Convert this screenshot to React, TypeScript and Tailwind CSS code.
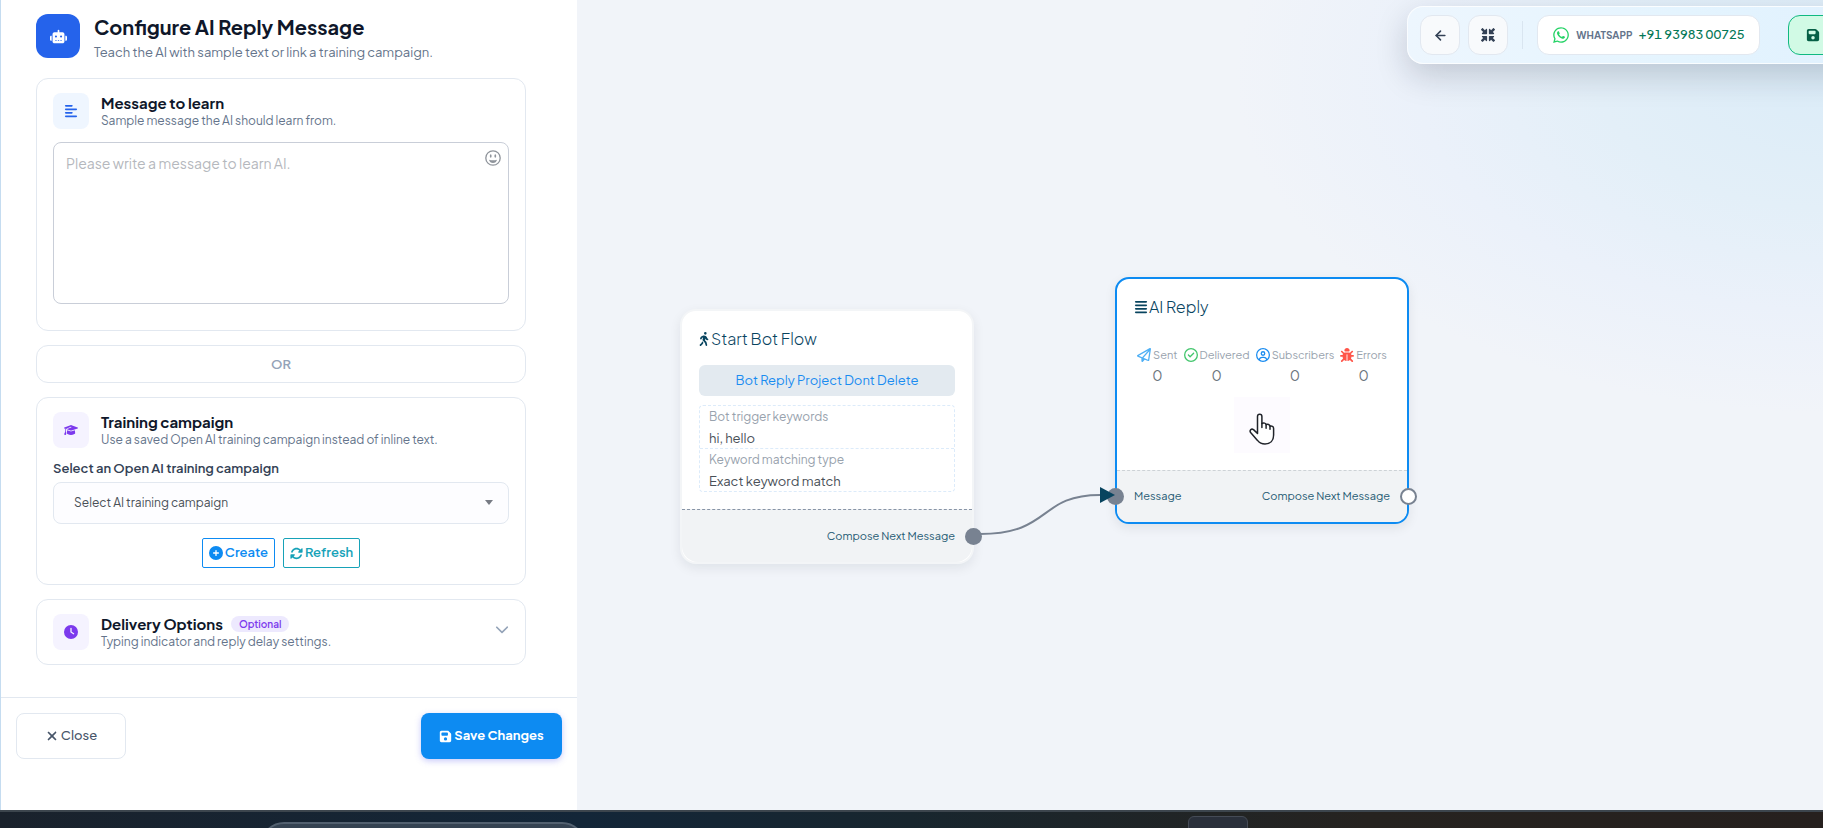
import { useState } from "react";
import type { ReactNode } from "react";
import {
  FaAlignJustify,
  FaAlignLeft,
  FaBug,
  FaChevronDown,
  FaCirclePlus,
  FaClock,
  FaFloppyDisk,
  FaGraduationCap,
  FaMinimize,
  FaPersonWalking,
  FaRegCircleCheck,
  FaRegCircleUser,
  FaRegPaperPlane,
  FaRobot,
  FaRotate,
  FaWhatsapp,
  FaXmark,
} from "react-icons/fa6";
import { ArrowLeft } from "lucide-react";

const STATS = [
  { label: "Sent", value: 0, icon: FaRegPaperPlane, color: "text-[#4fb0f5]" },
  { label: "Delivered", value: 0, icon: FaRegCircleCheck, color: "text-[#43c66d]" },
  { label: "Subscribers", value: 0, icon: FaRegCircleUser, color: "text-[#1a8cf0]" },
  { label: "Errors", value: 0, icon: FaBug, color: "text-[#ff5549]" },
];

const TRIGGERS = [
  { label: "Bot trigger keywords", value: "hi, hello" },
  { label: "Keyword matching type", value: "Exact keyword match" },
];

function Card({ children, className = "" }: { children: ReactNode; className?: string }) {
  return <section className={`rounded-xl border border-[#e2e8f0] bg-white ${className}`}>{children}</section>;
}

function CardHeading({
  icon,
  tile,
  title,
  subtitle,
  badge,
}: {
  icon: ReactNode;
  tile: string;
  title: string;
  subtitle: string;
  badge?: string;
}) {
  return (
    <div className="flex items-center gap-3">
      <span className={`flex size-9 shrink-0 items-center justify-center rounded-lg text-[14px] ${tile}`}>{icon}</span>
      <div>
        <h2 className="flex items-center gap-2 text-[15px] leading-5 font-bold text-[#0f172a]">
          {title}
          {badge && (
            <span className="rounded-full bg-[#ede9fe] px-2 text-[10px] leading-4 font-semibold text-[#7c3aed]">{badge}</span>
          )}
        </h2>
        <p className="text-[12px] leading-4 text-[#64748b]">{subtitle}</p>
      </div>
    </div>
  );
}

function Smiley() {
  return (
    <svg width="16" height="16" viewBox="0 0 16 16" fill="currentColor" aria-hidden="true">
      <circle cx="8" cy="8" r="7.200" fill="none" stroke="currentColor" strokeWidth="1.300" />
      <ellipse cx="5.700" cy="6" rx="0.900" ry="1.700" />
      <ellipse cx="10.300" cy="6" rx="0.900" ry="1.700" />
      <path d="M4 9.700c2.600.8 5.400.8 8 0-.4 2-2 3.300-4 3.300s-3.600-1.300-4-3.300z" />
    </svg>
  );
}

function Sidebar() {
  const [message, setMessage] = useState("");

  return (
    <aside className="flex w-[577px] shrink-0 flex-col border-l border-[#c5dcf0] bg-white">
      <div className="flex-1 pt-3.5 pr-[51px] pl-[35px]">
        <header className="flex items-start gap-3.5">
          <span className="flex size-11 items-center justify-center rounded-xl bg-[#2563eb] text-[17px] text-white">
            <FaRobot />
          </span>
          <div>
            <h1 className="text-[20px] leading-[26px] font-bold text-[#0f172a]">Configure AI Reply Message</h1>
            <p className="mt-0.5 text-[13px] leading-5 text-[#64748b]">Teach the AI with sample text or link a training campaign.</p>
          </div>
        </header>

        <div className="mt-4 flex flex-col gap-3.5">
          <Card className="px-4 pt-3.5 pb-[26px]">
            <CardHeading
              icon={<FaAlignLeft />}
              tile="bg-[#eff6ff] text-[#2563eb]"
              title="Message to learn"
              subtitle="Sample message the AI should learn from."
            />
            <div className="relative mt-[13px]">
              <textarea
                aria-label="Message to learn"
                placeholder="Please write a message to learn AI."
                value={message}
                onChange={(e) => setMessage(e.target.value)}
                className="block h-[162px] w-full resize-none rounded-lg border border-[#c9ced8] px-3 py-2 text-[14px] leading-6 text-[#334155] placeholder:text-[#b5b8bd]"
              />
              <button type="button" aria-label="Insert emoji" className="absolute top-2 right-2 text-[#8f949b]">
                <Smiley />
              </button>
            </div>
          </Card>

          <Card className="py-2 text-center text-[13px] leading-5 font-semibold text-[#94a3b8]">OR</Card>

          <Card className="px-4 pt-3.5 pb-4">
            <CardHeading
              icon={<FaGraduationCap />}
              tile="bg-[#f5f3ff] text-[#7c3aed]"
              title="Training campaign"
              subtitle="Use a saved Open AI training campaign instead of inline text."
            />
            <label htmlFor="campaign" className="mt-2.5 block text-[13px] leading-5 font-semibold text-[#334155]">
              Select an Open AI training campaign
            </label>
            <div className="relative mt-1">
              <select
                id="campaign"
                className="block h-[42px] w-full appearance-none rounded-lg border border-[#e2e8f0] bg-[#fdfdff] px-5 text-[12px] text-[#495057]"
              >
                <option>Select AI training campaign</option>
              </select>
              <span className="pointer-events-none absolute top-[18px] right-4 border-x-4 border-t-[5px] border-x-transparent border-t-[#777b84]" />
            </div>
            <div className="mt-3.5 flex justify-center gap-2">
              <button
                type="button"
                className="flex h-[30px] items-center gap-0.5 rounded-xs border border-[#0d8bf2] px-1.5 text-[13px] font-semibold text-[#0d8bf2]"
              >
                <FaCirclePlus className="text-[14px]" /> Create
              </button>
              <button
                type="button"
                className="flex h-[30px] items-center gap-0.5 rounded-xs border border-[#17a2b8] px-1.5 text-[13px] font-semibold text-[#17a2b8]"
              >
                <FaRotate /> Refresh
              </button>
            </div>
          </Card>

          <Card className="flex items-center justify-between px-4 py-3.5">
            <CardHeading
              icon={<FaClock />}
              tile="bg-[#f5f3ff] text-[#7c3aed]"
              title="Delivery Options"
              badge="Optional"
              subtitle="Typing indicator and reply delay settings."
            />
            <button type="button" aria-label="Show delivery options" className="pb-1.5 text-[14px] text-[#94a3b8]">
              <FaChevronDown />
            </button>
          </Card>
        </div>
      </div>

      <footer className="flex justify-between border-t border-[#e2e8f0] px-[15px] pt-[15px] pb-[51px]">
        <button
          type="button"
          className="flex h-[46px] w-[110px] items-center justify-center gap-0.5 rounded-lg border border-[#e2e8f0] text-[13px] font-medium text-[#475569]"
        >
          <FaXmark className="text-[14px]" /> Close
        </button>
        <button
          type="button"
          className="flex h-[46px] w-[141px] items-center justify-center gap-0.5 rounded-lg bg-[#0d8bf2] text-[13px] font-bold text-white shadow-[0_2px_6px_rgba(99,102,241,0.35)]"
        >
          <FaFloppyDisk /> Save Changes
        </button>
      </footer>
    </aside>
  );
}

function Toolbar() {
  return (
    <div className="absolute top-1.5 left-[830px] flex w-[560px] items-center gap-2 rounded-2xl border border-white/80 bg-linear-to-r from-[#edf6fe] via-[#e4f4fe] to-[#dfeffe] px-3 py-2 shadow-[0_12px_32px_rgba(15,23,42,0.18)]">
      <button type="button" aria-label="Back" className="flex size-10 items-center justify-center rounded-xl border border-[#e2e8f0] bg-[#f8fafc] text-[#334155]">
        <ArrowLeft size={15} strokeWidth={2.5} />
      </button>
      <button type="button" aria-label="Fit view" className="flex size-10 items-center justify-center rounded-xl border border-[#e2e8f0] bg-[#f8fafc] text-[14px] text-[#334155]">
        <FaMinimize />
      </button>
      <span className="mx-1.5 h-7 w-px bg-[#d9e5f0]" />
      <div className="flex h-10 w-[223px] items-center justify-center gap-1.5 rounded-xl border border-[#e2e8f0] bg-white">
        <FaWhatsapp className="text-[18px] text-[#25d366]" />
        <span className="text-[10px] font-bold text-[#64748b]">WHATSAPP</span>
        <span className="text-[13px] font-medium text-[#047857] tabular-nums">+91 93983 00725</span>
      </div>
      <button
        type="button"
        aria-label="Save"
        className="ml-5 flex h-10 w-24 items-center rounded-xl border border-[#10b981] bg-[#d1fae5] px-[17px] text-[14px] text-[#065f46]"
      >
        <FaFloppyDisk />
      </button>
    </div>
  );
}

function StartNode() {
  return (
    <article className="absolute top-[309px] left-[103px] w-[294px] rounded-2xl border-2 border-[#f3f5f7] bg-white shadow-[0_4px_12px_rgba(15,23,42,0.08)]">
      <div className="px-[17px] pt-4 pb-[17px]">
        <h2 className="flex items-center text-[16px] leading-6 font-light text-[#08445f]">
          <FaPersonWalking className="-ml-0.5 text-[14px]" /> Start Bot Flow
        </h2>
        <p className="mt-3.5 rounded-md bg-[#e3eaf0] text-center text-[13px] leading-[31px] text-[#1a8cf0]">Bot Reply Project Dont Delete</p>
        <dl className="mt-[9px] divide-y divide-dashed divide-[#dcebfa] rounded-sm border border-dashed border-[#dcebfa]">
          {TRIGGERS.map((t) => (
            <div key={t.label} className="px-[9px]">
              <dt className="text-[12px] leading-[22px] text-[#98a2ad]">{t.label}</dt>
              <dd className="text-[13px] leading-5 text-[#495057]">{t.value}</dd>
            </div>
          ))}
        </dl>
      </div>
      <div className="relative flex h-[53px] items-center justify-end rounded-b-2xl border-t border-dashed border-[#8794a6] bg-[#f1f3f5] px-[17px] text-[11px] text-[#1f5a73]">
        Compose Next Message
        <span className="absolute -right-2.5 size-[17px] rounded-full bg-[#788291]" />
      </div>
    </article>
  );
}

function ReplyNode() {
  return (
    <article className="absolute top-[277px] left-[538px] w-[294px] rounded-[14px] border-2 border-[#0d8bf2] bg-white shadow-[0_4px_12px_rgba(15,23,42,0.08)]">
      <div className="flex flex-col px-[17px] pt-4 pb-[17px]">
        <h2 className="flex items-center gap-px text-[16px] leading-6 font-light text-[#08445f]">
          <FaAlignJustify className="text-[14px]" /> AI Reply
        </h2>
        <ul className="mt-[26px] flex justify-center gap-1.5">
          {STATS.map(({ label, value, icon: Icon, color }) => (
            <li key={label} className="text-center">
              <span className="flex items-center gap-0.5 text-[11px] leading-5 text-[#98a2ad]">
                <Icon className={`text-[14px] ${color}`} /> {label}
              </span>
              <span className="block text-[14px] leading-5 text-[#6c757d]">{value}</span>
            </li>
          ))}
        </ul>
        <div className="mt-3 flex size-14 items-end justify-center self-center bg-[#fdfbff] pb-2">
          <Hand />
        </div>
      </div>
      <div className="relative flex h-[52px] items-center justify-between rounded-b-xl border-t border-dashed border-[#cdd2d6] bg-[#f1f3f5] px-[17px] text-[11px] text-[#1f5a73]">
        <span className="absolute -left-2.5 size-[17px] rounded-full bg-[#788291]" />
        <span>Message</span>
        <span>Compose Next Message</span>
        <span className="absolute -right-2.5 size-[17px] rounded-full border-2 border-[#788291] bg-white" />
      </div>
    </article>
  );
}

function Hand() {
  return (
    <svg width="26" height="32" viewBox="0 0 26 32" fill="white" stroke="#20232a" strokeWidth="1.5" strokeLinecap="round" strokeLinejoin="round" aria-hidden="true">
      <path d="M8.500 20.500V3.500a2.200 2.200 0 0 1 4.400 0V10.500c1.600-1 4-.4 4.200 1.200 1.600-.8 3.700-.2 3.900 1.500 1.700-.6 3.600.3 3.600 2.200V22c0 5.500-3.200 9-8.600 9-3.500 0-5.700-1.300-7.500-3.600L1.600 19.500c-1.400-2 .6-4.300 2.900-2.900z" />
      <path d="M12.900 10.500v4M17.100 11.700v3.600M21 13.200v3" fill="none" />
    </svg>
  );
}

function Canvas() {
  return (
    <main className="relative flex-1 overflow-hidden bg-[#f1f4f9] bg-[radial-gradient(ellipse_600px_340px_at_101%_9%,#dbecf8_0%,#e3eff8_40%,#ebf1fa_70%,#f1f4f9_100%)]">
      <Toolbar />
      <StartNode />
      <ReplyNode />
      {/* connector between the two nodes */}
      <svg className="absolute top-[480px] left-[397px]" width="144" height="64" fill="none" aria-hidden="true">
        <path d="M6 54C78 54 64 15 126 15" stroke="#788291" strokeWidth="2" />
        <path d="M126 7L141 15L126 23z" fill="#08445f" />
      </svg>
    </main>
  );
}

function Taskbar() {
  return (
    <div className="flex h-[18px] shrink-0 items-start overflow-hidden border-t-2 border-[#3c454d] bg-[linear-gradient(90deg,#1a222c_0%,#132638_32%,#18262e_50%,#262320_75%,#26201e_100%)]">
      <span className="mt-2.5 ml-[260px] h-16 w-[326px] shrink-0 rounded-3xl border-2 border-[#536170] bg-[#354352]" />
      <span className="mt-1 ml-[602px] h-12 w-[60px] shrink-0 rounded-md border border-[#454b56] bg-[#2a303b]" />
    </div>
  );
}

export default function App() {
  return (
    <div className="flex h-screen flex-col overflow-hidden font-['Plus_Jakarta_Sans',Inter,sans-serif]">
      <div className="flex min-h-0 flex-1">
        <Sidebar />
        <Canvas />
      </div>
      <Taskbar />
    </div>
  );
}
